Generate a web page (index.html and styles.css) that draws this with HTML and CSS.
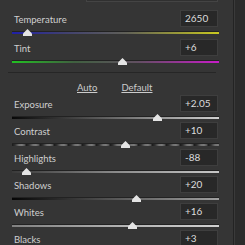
FILE: index.html
```html
<!DOCTYPE html>
<html lang="en">
<head>
    <meta charset="UTF-8">
    <title>Basic</title>
    <link rel="stylesheet" href="styles.css">
</head>
<body>
    <div id="panel">
        <div class="top-box"></div>

        <div class="group color-group">
            <div class="slider">
                <div class="row">
                    <span class="label">Temperature</span>
                    <span class="value">2650</span>
                </div>
                <div class="track temp"><span class="thumb" style="left: 15px"></span></div>
            </div>
            <div class="slider">
                <div class="row">
                    <span class="label">Tint</span>
                    <span class="value">+6</span>
                </div>
                <div class="track tint"><span class="thumb" style="left: 110px"></span></div>
            </div>
        </div>

        <div class="separator"></div>

        <div class="links">
            <a href="#" class="auto">Auto</a>
            <a href="#" class="default">Default</a>
        </div>

        <div class="group">
            <div class="slider">
                <div class="row">
                    <span class="label">Exposure</span>
                    <span class="value">+2.05</span>
                </div>
                <div class="track exposure"><span class="thumb" style="left: 145px"></span></div>
            </div>
            <div class="slider">
                <div class="row">
                    <span class="label">Contrast</span>
                    <span class="value">+10</span>
                </div>
                <div class="track contrast"><span class="thumb" style="left: 113px"></span></div>
            </div>
            <div class="slider">
                <div class="row">
                    <span class="label">Highlights</span>
                    <span class="value">-88</span>
                </div>
                <div class="track highlights"><span class="thumb" style="left: 14px"></span></div>
            </div>
            <div class="slider">
                <div class="row">
                    <span class="label">Shadows</span>
                    <span class="value">+20</span>
                </div>
                <div class="track shadows"><span class="thumb" style="left: 124px"></span></div>
            </div>
            <div class="slider">
                <div class="row">
                    <span class="label">Whites</span>
                    <span class="value">+16</span>
                </div>
                <div class="track whites"><span class="thumb" style="left: 120px"></span></div>
            </div>
            <div class="slider">
                <div class="row">
                    <span class="label">Blacks</span>
                    <span class="value">+3</span>
                </div>
                <div class="track blacks"></div>
            </div>
        </div>
    </div>
</body>
</html>
```

FILE: styles.css
```css
html, body {
    margin: 0;
    height: 100%;
    overflow: hidden;
}

body {
    background-color: #2b2b2b;
    font-family: Lato, "Open Sans", sans-serif;
    font-size: 9.5px;
    color: #cfcfcf;
}

#panel {
    width: 233px;
    height: 245px;
    background-color: #353535;
    border-right: 1px solid #232323;
    box-shadow: 1px 0 0 #3a3a3a;
    overflow: hidden;
}

.top-box {
    margin-left: 86px;
    width: 130px;
    height: 1px;
    border: 1px solid #444444;
    border-top: none;
    background-color: #303030;
}

.group {
    display: flex;
    flex-direction: column;
    padding-top: 8px;
}

.color-group .slider + .slider {
    margin-top: 2px;
}

.slider {
    height: 27px;
}

.row {
    display: flex;
    justify-content: space-between;
    align-items: center;
    height: 17px;
    padding-left: 14px;
    padding-right: 15px;
}

.label {
    line-height: 17px;
    padding-top: 1px;
}

.value {
    box-sizing: border-box;
    width: 38px;
    height: 17px;
    line-height: 15px;
    padding-left: 4px;
    background-color: #282828;
    border: 1px solid #3e3e3e;
    color: #dcdcdc;
    font-size: 10px;
}

.track {
    position: relative;
    margin: 4px 0 0 12px;
    width: 207px;
    height: 2px;
    border-top: 1px solid #222222;
    background: linear-gradient(to right, #555555, #aaaaaa);
}

.track.temp {
    background: linear-gradient(to right, #2020a8, #404070 25%, #606058 55%, #c8c820);
}

.track.tint {
    background: linear-gradient(to right, #22c022, #406040 30%, #605060 60%, #c81cc8);
}

.track.exposure {
    background: linear-gradient(to right, #080808, #606060 45%, #d0d0d0);
}

.track.contrast {
    background: repeating-linear-gradient(to right, #1a1a1a 0, #303030 3px, #707070 7px, #7a7a7a 10px, #505050 13px, #1a1a1a 14px);
}

.track.highlights {
    background: linear-gradient(to right, #3a3a3a, #8a8a8a 50%, #c8c8c8);
}

.track.shadows {
    background: linear-gradient(to right, #050505, #505050 45%, #a0a0a0);
}

.track.whites {
    background: linear-gradient(to right, #808080, #b0b0b0 50%, #d0d0d0);
}

.track.blacks {
    background: linear-gradient(to right, #000000, #606060);
}

.thumb {
    position: absolute;
    top: -3px;
    width: 9px;
    height: 7px;
    margin-left: -4px;
    background-color: #e4e4e4;
    clip-path: polygon(50% 0, 100% 65%, 100% 100%, 0 100%, 0 65%);
}

.separator {
    margin: 6px 17px 0 8px;
    height: 1px;
    background-color: #262626;
}

.links {
    display: flex;
    gap: 24px;
    padding-left: 77px;
    padding-top: 8px;
    height: 14px;
    line-height: 14px;
}

.links a {
    color: #cccccc;
    text-decoration: underline;
}

.links + .group {
    padding-top: 0;
}
```
